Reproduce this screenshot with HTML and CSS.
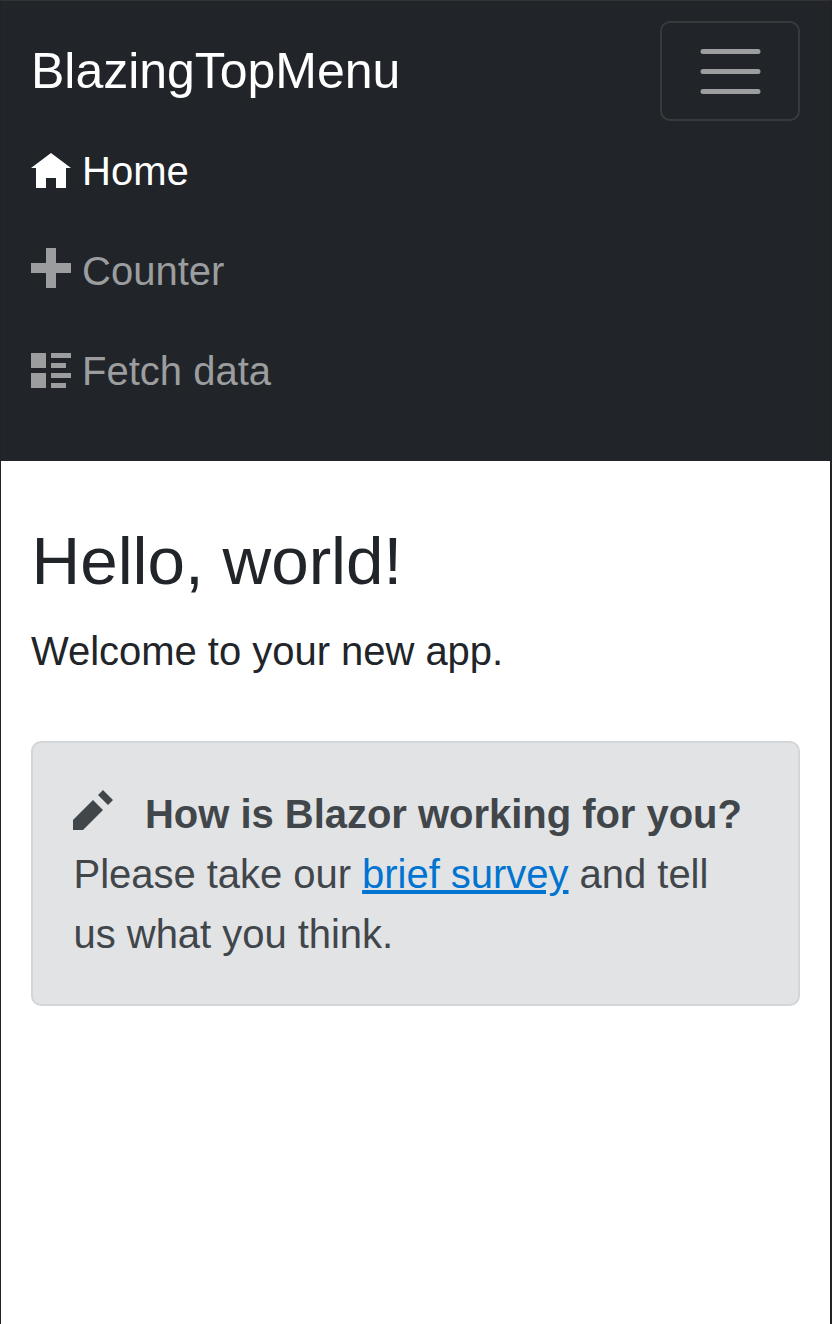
FILE: index.html
```
<!DOCTYPE html>
<html lang="en">
<head>
<meta charset="utf-8">
<title>BlazingTopMenu</title>
<link rel="stylesheet" href="styles.css">
</head>
<body>
<div class="page">
  <header class="navbar">
    <div class="navbar-top">
      <a class="brand">BlazingTopMenu</a>
      <button class="toggler" aria-label="Toggle navigation">
        <svg class="toggler-icon" viewBox="0 0 30 30"><path stroke="currentColor" stroke-linecap="round" stroke-width="2" d="M4 7h22M4 15h22M4 23h22"/></svg>
      </button>
    </div>
    <nav class="nav-list">
      <a class="nav-link active"><svg class="icon icon-home" viewBox="0 0 8 8"><path d="M4 0l-4 3h1v4h2v-2h2v2h2v-4h1l-4-3z"/></svg><span>Home</span></a>
      <a class="nav-link"><svg class="icon icon-plus" viewBox="0 0 8 8"><path d="M3 0v3h-3v2h3v3h2v-3h3v-2h-3v-3h-2z"/></svg><span>Counter</span></a>
      <a class="nav-link"><svg class="icon icon-list" viewBox="0 0 8 8"><path d="M0 0v3h3v-3h-3zm4 0v1h4v-1h-4zm0 2v1h3v-1h-3zm-4 2v3h3v-3h-3zm4 0v1h4v-1h-4zm0 2v1h3v-1h-3z"/></svg><span>Fetch data</span></a>
    </nav>
  </header>
  <main class="content">
    <h1 class="title">Hello, world!</h1>
    <p class="lead">Welcome to your new app.</p>
    <div class="alert">
      <div class="alert-head"><svg class="icon icon-pencil" viewBox="0 0 8 8"><path d="M6 0l-1 1 2 2 1-1-2-2zm-2 2l-4 4v2h2l4-4-2-2z"/></svg><strong>How is Blazor working for you?</strong></div>
      <p class="alert-text">Please take our <a class="link">brief survey</a> and tell<br>us what you think.</p>
    </div>
  </main>
</div>
</body>
</html>
```
FILE: styles.css
```
* { box-sizing: border-box; }
body {
  margin: 0;
  background: #fff;
  color: #212529;
  font-family: "Liberation Sans", Arial, sans-serif;
  font-size: 40px;
  line-height: 60px;
}
.page {
  min-height: 1324px;
  border: solid #212224;
  border-width: 1px 2px 0 1px;
  border-top-color: #333;
}
.navbar {
  height: 460px;
  padding: 20px 30px;
  background: #212529;
}
.navbar-top {
  display: flex;
  align-items: center;
  justify-content: space-between;
}
.brand { color: #fff; font-size: 50px; letter-spacing: -0.03px; }
.toggler {
  display: flex;
  align-items: center;
  justify-content: center;
  width: 140px;
  height: 100px;
  padding: 0;
  border: 2px solid #373b3e;
  border-radius: 10px;
  background: transparent;
  color: #9b9d9f;
}
.toggler-icon { width: 75px; height: 75px; margin-left: 1px; margin-top: 1px; }
.nav-link {
  display: flex;
  gap: 11px;
  padding: 20px 0;
  color: #9b9d9f;
}
.nav-link.active { color: #fff; }
.icon { flex: none; width: 40px; height: 40px; fill: currentColor; }
.icon-home { margin-top: 12px; }
.icon-plus { margin-top: 7px; }
.icon-list { margin-top: 12px; }
.content { padding: 60px 30px; }
.title {
  margin: 0 0 20px;
  padding-left: 0.5px;
  font-size: 67.4px;
  font-weight: 400;
  line-height: 80px;
}
.lead { margin: 0 0 60px; letter-spacing: -0.03px; }
.alert {
  height: 265px;
  padding: 41px 40px;
  border: 2px solid #d3d6d8;
  border-radius: 10px;
  background: #e2e3e5;
  color: #41464b;
}
.alert-head { display: flex; gap: 32px; white-space: nowrap; letter-spacing: -0.03px; }
.icon-pencil { margin-top: 6px; }
.alert-text { margin: 0; padding-left: 0.5px; white-space: nowrap; letter-spacing: -0.03px; }
.link { color: #0074d0; text-decoration: underline; text-decoration-thickness: 4px; }
```
